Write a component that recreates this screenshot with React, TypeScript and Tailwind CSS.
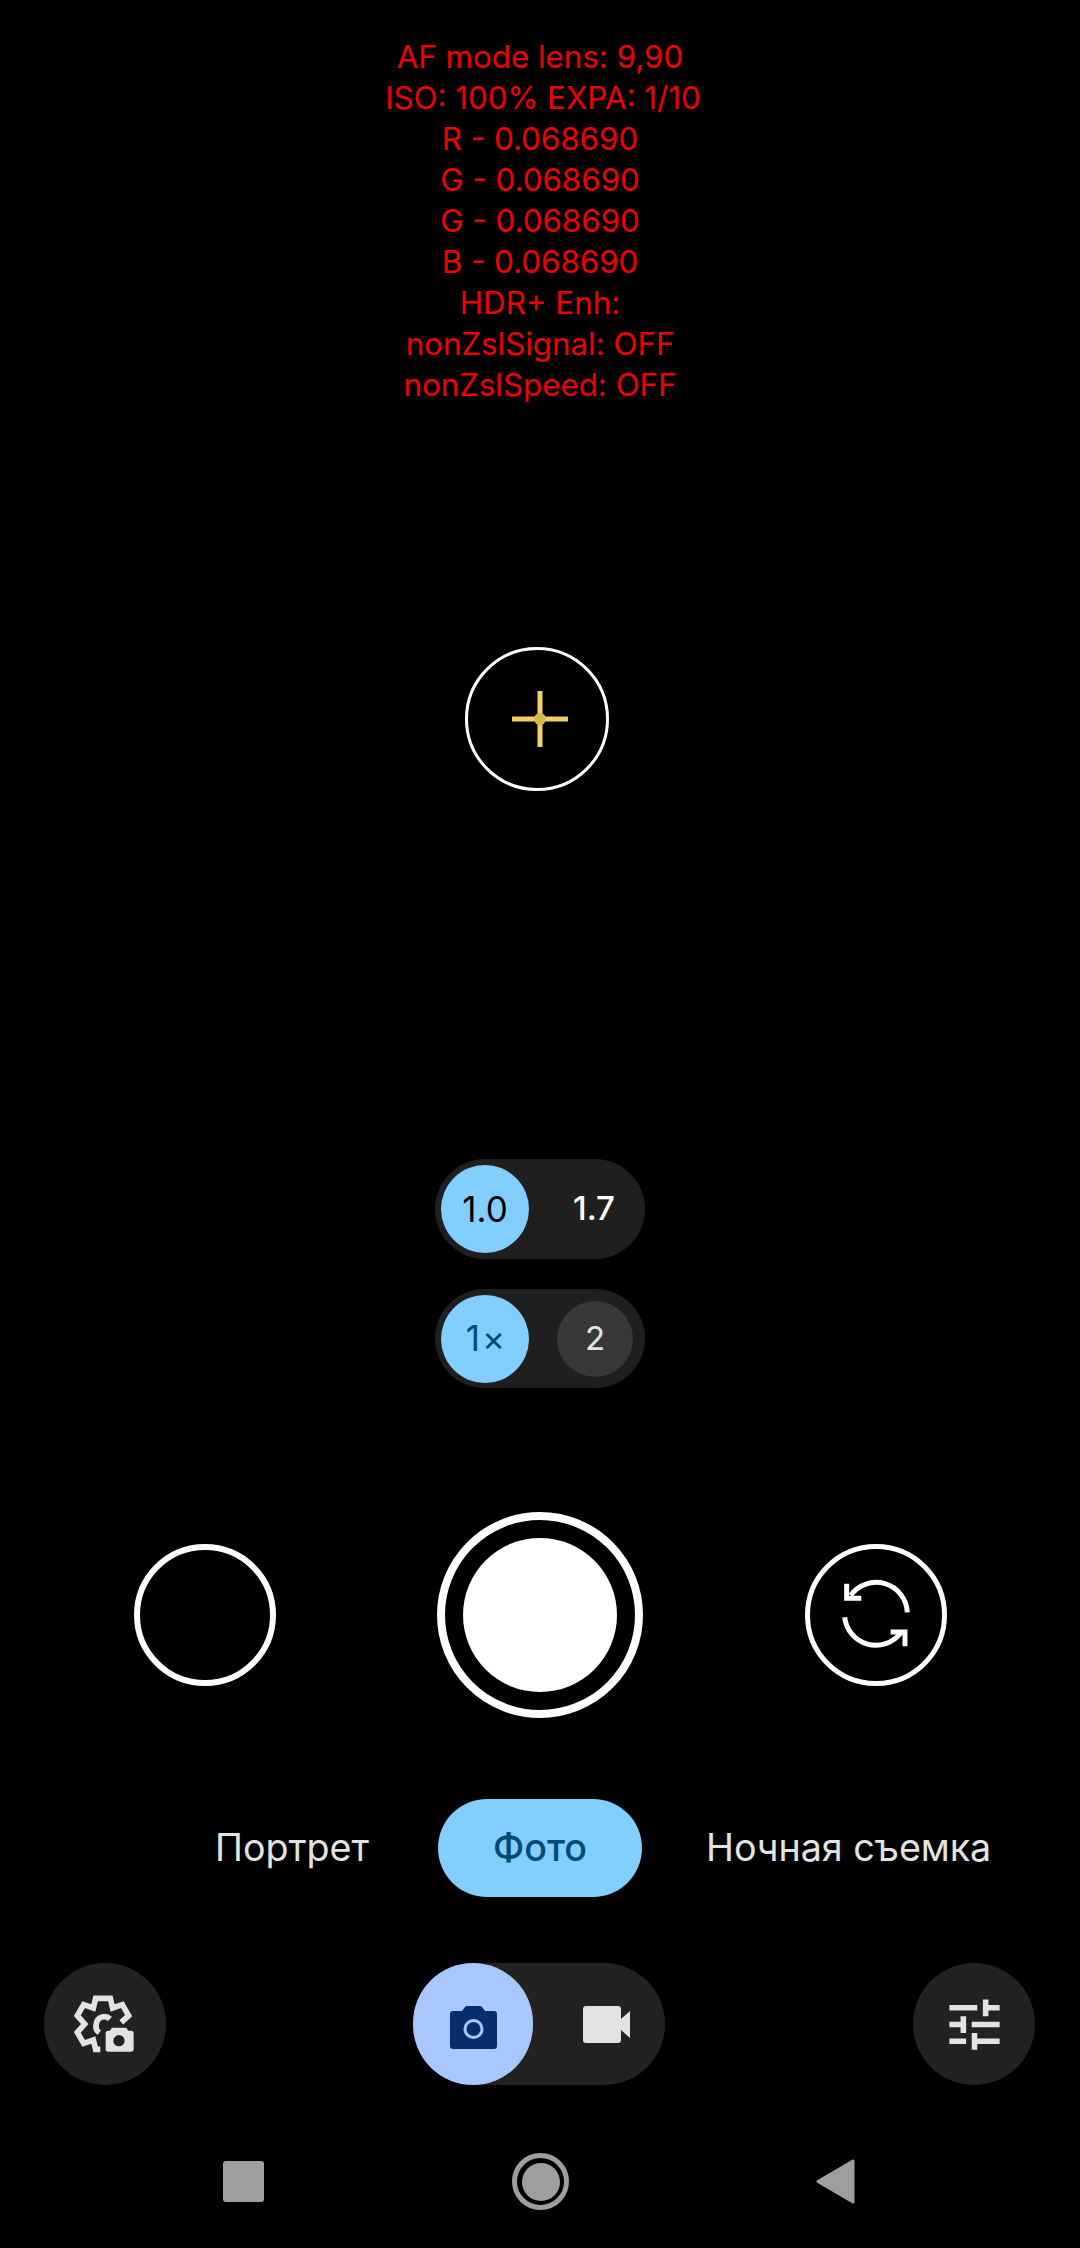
export default function App() {
  const info = [
    "AF mode lens: 9,90",
    "ISO: 100% EXPA: 1/10",
    "R - 0.068690",
    "G - 0.068690",
    "G - 0.068690",
    "B - 0.068690",
    "HDR+ Enh:",
    "nonZslSignal: OFF",
    "nonZslSpeed: OFF",
  ];
  return (
    <div className="w-[1080px] h-[2248px] bg-black overflow-hidden flex flex-col font-['Inter','Noto_Sans',sans-serif]">
      <div className="pt-[37px] flex flex-col items-center text-[#f00000] text-[31.3px] leading-[41px]">
        {info.map((t, i) => (
          <div key={i} className={i === 1 ? "translate-x-[3px]" : ""}>{t}</div>
        ))}
      </div>

      <div className="mt-[241px] flex justify-center">
        <div className="relative w-[144px] h-[144px] ml-[-6px] rounded-full border-[3px] border-white flex items-center justify-center">
          <svg width="56" height="56" viewBox="0 0 56 56" className="translate-x-[3px]">
            <rect x="25.5" y="0" width="5" height="56" fill="#f2cf60" />
            <rect x="0" y="25.5" width="56" height="5" fill="#f2cf60" />
            <circle cx="28" cy="28" r="6" fill="#d9b850" />
          </svg>
        </div>
      </div>

      <div className="mt-[368px] mx-auto w-[210px] h-[100px] rounded-full bg-[#1f1f1f] pl-[6px] flex items-center">
        <div className="w-[88px] h-[88px] rounded-full bg-[#82cfff] flex items-center justify-center text-[35px] text-black">1.0</div>
        <div className="w-[116px] pl-[14px] text-center text-[33px] font-medium text-white">1.7</div>
      </div>
      <div className="mt-[30px] mx-auto w-[210px] h-[99px] rounded-full bg-[#1f1f1f] pl-[6px] flex items-center">
        <div className="w-[88px] h-[88px] rounded-full bg-[#82cfff] pl-[3px] flex items-center justify-center text-[35px] tracking-[2px] text-[#004a77]">1×</div>
        <div className="ml-[28px] w-[76px] h-[76px] rounded-full bg-[#383838] flex items-center justify-center text-[33px] text-[#e3e3e3]">2</div>
      </div>

      <div className="mt-[124px] h-[206px] pl-[134px] flex items-center">
        <div className="w-[142px] h-[142px] rounded-full border-[6px] border-white" />
        <div className="ml-[161px] w-[206px] h-[206px] rounded-full border-[8px] border-white flex items-center justify-center">
          <div className="w-[154px] h-[154px] rounded-full bg-white" />
        </div>
        <div className="ml-[162px] w-[142px] h-[142px] rounded-full border-[5px] border-white flex items-center justify-center">
          <svg width="73.3" height="73.3" viewBox="180 180 220 220" fill="none" stroke="#fff" strokeWidth="15">
            <path d="M385 283 A94 94 0 0 0 215 232" />
            <path d="M197 298 A94 94 0 0 0 365 345" />
            <path d="M203 197 V241 H247" />
            <path d="M378 385 V342 H335" />
          </svg>
        </div>
      </div>

      <div className="mt-[81px] h-[98px] pl-[215px] flex items-center text-[37.6px] text-[#e3e3e3]">
        <div className="w-[223px] whitespace-nowrap">Портрет</div>
        <div className="w-[204px] h-[98px] rounded-full bg-[#82cfff] text-[#004a77] font-medium flex items-center justify-center">Фото</div>
        <div className="ml-[64px] whitespace-nowrap">Ночная съемка</div>
      </div>

      <div className="mt-[66px] h-[122px] pl-[44px] flex items-center">
        <div className="w-[122px] h-[122px] rounded-full bg-[#222222] flex items-center justify-center">
          <svg width="63.3" height="60" viewBox="165 165 190 180" fill="none">
            <path d="M247 331 H233 L226 303 L197 313 L178 280 L200 255 L178 230 L197 197 L226 207 L233 178 H277 L284 207 L313 197 L332 230 L310 250" stroke="#e3e3e3" strokeWidth="17" />
            <path d="M276 240 A24 24 0 0 0 235 255 A24 24 0 0 0 244 281" stroke="#e3e3e3" strokeWidth="17" />
            <path fillRule="evenodd" d="M282 266 H325 L331 275 H339 Q347 275 347 283 V330 Q347 338 339 338 H271 Q263 338 263 330 V283 Q263 275 271 275 H276 Z M303 288 A17 17 0 1 0 303 322 A17 17 0 1 0 303 288 Z" fill="#e3e3e3" />
          </svg>
        </div>

        <div className="ml-[247px] w-[252px] h-[122px] rounded-full bg-[#222222] flex items-center">
          <div className="w-[120px] h-[122px] rounded-full bg-[#a8c7fa] flex items-center justify-center">
            <svg width="47" height="43" viewBox="0 0 47 43" className="translate-y-[3px]">
              <path fillRule="evenodd" d="M3 5 H12 L15 1 Q15.5 0 17 0 H30 Q31.5 0 32 1 L35 5 H44 Q47 5 47 8 V40 Q47 43 44 43 H3 Q0 43 0 40 V8 Q0 5 3 5 Z M23.5 13 A10 10 0 1 0 23.5 33 A10 10 0 1 0 23.5 13 Z" fill="#062e6f" />
              <circle cx="23.5" cy="23" r="7" fill="#062e6f" />
            </svg>
          </div>
          <div className="ml-[50px]">
            <svg width="47" height="37" viewBox="0 0 47 37" className="block">
              <path d="M3 0 H35 Q38 0 38 3 V34 Q38 37 35 37 H3 Q0 37 0 34 V3 Q0 0 3 0 Z M38 13 L47 5 V32 L38 24 Z" fill="#e3e3e3" />
            </svg>
          </div>
        </div>

        <div className="ml-[248px] w-[122px] h-[122px] rounded-full bg-[#222222] flex items-center justify-center">
          <svg width="67" height="67" viewBox="0 0 24 24" fill="#e3e3e3">
            <path d="M3 17v2h6v-2H3zM3 5v2h10V5H3zm10 16v-2h8v-2h-8v-2h-2v6h2zM7 9v2H3v2h4v2h2V9H7zm14 4v-2H11v2h10zm-6-4h2V7h4V5h-4V3h-2v6z" />
          </svg>
        </div>
      </div>

      <div className="mt-[68px] h-[57px] pl-[223px] flex items-center">
        <div className="w-[41px] h-[41px] rounded-[3px] bg-[#9e9e9e]" />
        <div className="ml-[248px] w-[57px] h-[57px] rounded-full border-[5px] border-[#9e9e9e] flex items-center justify-center">
          <div className="w-[38px] h-[38px] rounded-full bg-[#9e9e9e]" />
        </div>
        <div className="ml-[247px]">
          <svg width="39" height="45" viewBox="0 0 39 45" className="block">
            <path d="M2 22.5 L37 2 V43 Z" fill="#9e9e9e" stroke="#9e9e9e" strokeWidth="3" strokeLinejoin="round" />
          </svg>
        </div>
      </div>
    </div>
  );
}
